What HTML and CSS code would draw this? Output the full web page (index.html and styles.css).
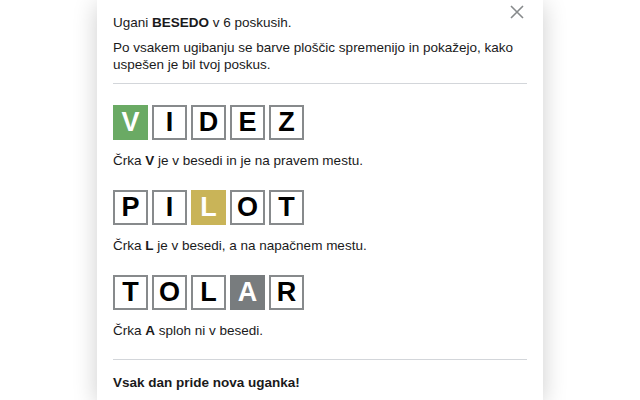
FILE: index.html
```html
<!DOCTYPE html>
<html>
<head>
    <meta charset="UTF-8">
    <title>Navodila</title>
    <link rel="stylesheet" href="styles.css">
</head>
<body>
    <div class="modal">
        <button class="close" aria-label="Zapri">
            <svg width="14" height="14" viewBox="0 0 14 14">
                <path d="M1 1 L13 13 M13 1 L1 13" stroke="#878a8c" stroke-width="1.6" fill="none"/>
            </svg>
        </button>

        <p>Ugani <strong>BESEDO</strong> v 6 poskusih.</p>
        <p>Po vsakem ugibanju se barve ploščic spremenijo in pokažejo, kako uspešen je bil tvoj poskus.</p>

        <div class="examples">
            <div class="example">
                <div class="row">
                    <div class="tile correct">V</div>
                    <div class="tile">I</div>
                    <div class="tile">D</div>
                    <div class="tile">E</div>
                    <div class="tile">Z</div>
                </div>
                <p>Črka <strong>V</strong> je v besedi in je na pravem mestu.</p>
            </div>

            <div class="example">
                <div class="row">
                    <div class="tile">P</div>
                    <div class="tile">I</div>
                    <div class="tile present">L</div>
                    <div class="tile">O</div>
                    <div class="tile">T</div>
                </div>
                <p>Črka <strong>L</strong> je v besedi, a na napačnem mestu.</p>
            </div>

            <div class="example">
                <div class="row">
                    <div class="tile">T</div>
                    <div class="tile">O</div>
                    <div class="tile">L</div>
                    <div class="tile absent">A</div>
                    <div class="tile">R</div>
                </div>
                <p>Črka <strong>A</strong> sploh ni v besedi.</p>
            </div>
        </div>

        <p class="footer"><strong>Vsak dan pride nova uganka!</strong></p>
    </div>
</body>
</html>
```

FILE: styles.css
```css
body {
    margin: 0;
    background-color: #ffffff;
    font-family: "Liberation Sans", Arial, Helvetica, sans-serif;
    color: #1a1a1b;
    font-size: 13.5px;
    line-height: 17px;
    overflow: hidden;
}

.modal {
    position: relative;
    width: 414px;
    height: 386px;
    margin: 0 auto;
    padding: 14px 16px 0;
    background-color: #ffffff;
    box-shadow: 0 4px 23px 0 rgba(0, 0, 0, 0.2);
}

.modal p {
    margin: 0 0 8px;
}

.close {
    position: absolute;
    top: 5px;
    right: 19px;
    padding: 0;
    border: none;
    background: none;
    cursor: pointer;
}

.examples {
    margin-top: 10px;
    padding: 21px 0 20px;
    border-top: 1px solid #d3d6da;
    border-bottom: 1px solid #d3d6da;
}

.example {
    margin-bottom: 21px;
}

.example:last-child {
    margin-bottom: 0;
}

.example p {
    margin: 12px 0 0;
}

.row {
    display: flex;
    gap: 4px;
}

.tile {
    width: 31px;
    height: 31px;
    border: 2px solid #878a8c;
    display: flex;
    align-items: center;
    justify-content: center;
    font-size: 27px;
    font-weight: bold;
    color: #000000;
}

.tile.correct {
    background-color: #6aaa64;
    border-color: #6aaa64;
    color: #ffffff;
}

.tile.present {
    background-color: #c9b458;
    border-color: #c9b458;
    color: #ffffff;
}

.tile.absent {
    background-color: #787c7e;
    border-color: #787c7e;
    color: #ffffff;
}

.modal p.footer {
    margin: 14px 0 0;
}
```
